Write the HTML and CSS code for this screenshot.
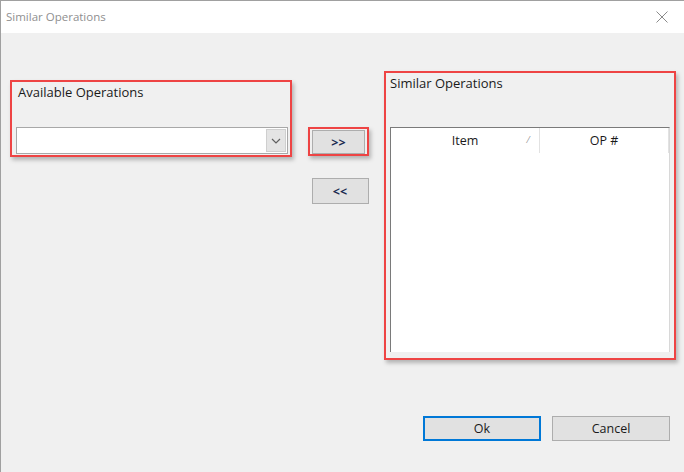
FILE: index.html
```html
<!DOCTYPE html>
<html lang="en">
<head>
  <meta charset="UTF-8" />
  <title>Similar Operations</title>
  <link rel="stylesheet" href="styles.css">
</head>
<body>
  <div class="window">
    <div class="title-bar">
      <span class="title">Similar Operations</span>
      <svg class="close" width="12" height="12" viewBox="0 0 12 12">
        <path d="M0.5 0.5 L11.5 11.5 M11.5 0.5 L0.5 11.5" stroke="#8a8a8a" stroke-width="1" fill="none"/>
      </svg>
    </div>

    <div class="content">
      <div class="panels">
        <div class="available highlight">
          <div class="label">Available Operations</div>
          <div class="combo">
            <div class="combo-text"></div>
            <div class="combo-btn">
              <svg width="10" height="6" viewBox="0 0 10 6">
                <path d="M1 1 L5 5 L9 1" stroke="#606060" stroke-width="1.2" fill="none"/>
              </svg>
            </div>
          </div>
        </div>

        <div class="move-buttons">
          <div class="highlight add-wrap">
            <button class="btn move">&gt;&gt;</button>
          </div>
          <button class="btn move remove">&lt;&lt;</button>
        </div>

        <div class="similar highlight">
          <div class="label">Similar Operations</div>
          <div class="list-view">
            <div class="list-header">
              <div class="col col-item">Item<span class="sort">&#8260;</span></div>
              <div class="col col-op">OP #</div>
            </div>
            <div class="list-body"></div>
          </div>
        </div>
      </div>

      <div class="footer">
        <button class="btn dialog-btn default">Ok</button>
        <button class="btn dialog-btn">Cancel</button>
      </div>
    </div>
  </div>
</body>
</html>
```

FILE: styles.css
```css
* {
  margin: 0;
  padding: 0;
  box-sizing: border-box;
}
body {
  width: 684px;
  height: 472px;
  overflow: hidden;
  font-family: "Open Sans", "Liberation Sans", sans-serif;
  font-size: 13px;
  color: #1a1a1a;
  background: #f0f0f0;
}
.window {
  width: 684px;
  height: 472px;
  border-left: 1px solid #a0a0a0;
  border-top: 1px solid #a0a0a0;
  background: #f0f0f0;
  display: flex;
  flex-direction: column;
}
.title-bar {
  height: 32px;
  background: #fff;
  display: flex;
  align-items: center;
  justify-content: space-between;
  padding: 0 16px 0 5px;
}
.title {
  font-family: "Open Sans", "Noto Sans", sans-serif;
  font-size: 11.5px;
  color: #8f8f8f;
  margin-top: -1px;
}
.close {
  margin-top: -1px;
}
.content {
  flex: 1;
  display: flex;
  flex-direction: column;
}
.panels {
  display: flex;
  align-items: flex-start;
  padding-left: 9px;
}
.highlight {
  border: 2px solid #ee4444;
  box-shadow: 2px 3px 4px rgba(0, 0, 0, 0.25);
}
.label {
  font-size: 13px;
  line-height: 16px;
  color: #1a1a1a;
}
.available {
  margin-top: 47px;
  width: 282px;
  height: 77px;
  padding: 2px 3px 0 6px;
}
.combo {
  margin-top: 27px;
  margin-left: -2px;
  width: 272px;
  height: 27px;
  display: flex;
  background: #fff;
  border: 1px solid #a8a8a8;
}
.combo-text {
  flex: 1;
}
.combo-btn {
  width: 20px;
  margin: 1px;
  background: #e4e4e4;
  border: 1px solid #cfcfcf;
  display: flex;
  align-items: center;
  justify-content: center;
}
.move-buttons {
  margin-top: 94px;
  margin-left: 16px;
  width: 61px;
  display: flex;
  flex-direction: column;
  align-items: center;
}
.add-wrap {
  width: 61px;
  height: 29px;
  padding: 1px 2px;
  display: flex;
}
.btn {
  font-family: "Open Sans", "Liberation Sans", sans-serif;
  font-size: 12.5px;
  color: #1a1a1a;
  background: #e1e1e1;
  border: 1px solid #adadad;
}
.move {
  width: 55px;
  height: 24px;
  font-weight: bold;
  font-size: 12.5px;
  color: #1a2a50;
}
.remove {
  margin-top: 22px;
  width: 57px;
  height: 26px;
  margin-left: 3px;
}
.similar {
  margin-top: 38px;
  margin-left: 15px;
  width: 292px;
  height: 289px;
  padding: 2px 4px 0 4px;
}
.list-view {
  margin-top: 36px;
  width: 280px;
  height: 225px;
  background: #fff;
  border: 1px solid #7a7a7a;
  border-right-color: #d8d8d8;
  border-bottom: none;
  display: flex;
  flex-direction: column;
}
.list-header {
  height: 25px;
  display: flex;
}
.col {
  display: flex;
  align-items: center;
  justify-content: center;
  position: relative;
  font-size: 12.5px;
}
.col-item {
  width: 149px;
  border-right: 1px solid #e2e2e2;
}
.col-op {
  width: 129px;
  border-right: 1px solid #e2e2e2;
}
.sort {
  position: absolute;
  right: 10px;
  top: 5px;
  font-size: 9px;
  color: #888;
}
.list-body {
  flex: 1;
}
.footer {
  margin-top: 56px;
  display: flex;
  justify-content: flex-end;
  gap: 11px;
  padding-right: 14px;
}
.dialog-btn {
  width: 118px;
  height: 25px;
}
.default {
  border: 2px solid #0078d7;
}
```
